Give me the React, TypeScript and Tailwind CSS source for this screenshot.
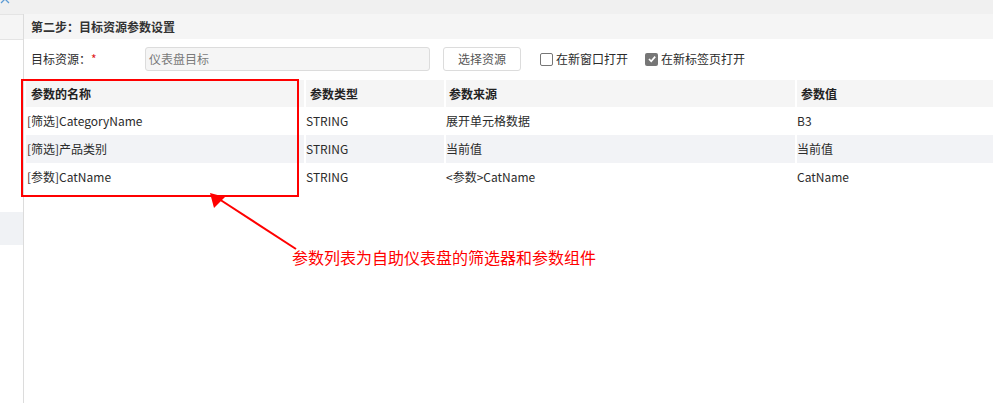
import React from "react";

const rows = [
  { name: "[筛选]CategoryName", type: "STRING", src: "展开单元格数据", val: "B3" },
  { name: "[筛选]产品类别", type: "STRING", src: "当前值", val: "当前值" },
  { name: "[参数]CatName", type: "STRING", src: "<参数>CatName", val: "CatName" },
];

export default function App() {
  return (
    <div className="relative w-[993px] h-[403px] overflow-hidden bg-white font-['Noto_Sans_CJK_SC','Noto_Sans',sans-serif] text-[12px] text-[#2b2b2b]">
      <div className="relative h-[14px] bg-[#f0f0f0]">
        <svg className="absolute left-0 top-[-5px]" width="12" height="10" viewBox="0 0 12 10">
          <polyline points="1,8 5,4 9,8" fill="none" stroke="#5b9bd5" strokeWidth="1.3" />
        </svg>
      </div>
      <div className="flex h-[389px]">
        <div className="flex w-[24px] flex-col border-r border-[#dcdcdc]">
          <div className="h-[26px] border-y border-[#e4e4e4] bg-[#f5f5f5]" />
          <div className="h-[172px]" />
          <div className="h-[33px] bg-[#f0f2f5]" />
        </div>
        <div className="flex flex-1 flex-col">
          <div className="flex h-[25px] items-center bg-[#f5f5f5] pl-[7px] font-bold text-[#333]">
            第二步：目标资源参数设置
          </div>
          <div className="mt-[8px] flex h-[24px] items-center">
            <div className="w-[121px] pl-[7px]">
              目标资源：<span className="text-[#e02020]">*</span>
            </div>
            <div className="flex h-[24px] w-[285px] items-center rounded-[3px] border border-[#dcdcdc] bg-[#f5f5f5] pl-[3px] text-[#7a7a7a]">
              仪表盘目标
            </div>
            <div className="ml-[13px] flex h-[24px] w-[78px] items-center justify-center rounded-[3px] border border-[#dcdcdc] bg-white text-[#555]">
              选择资源
            </div>
            <div className="ml-[19px] flex items-center">
              <div className="h-[13px] w-[13px] rounded-[2px] border border-[#767676] bg-white" />
              <span className="ml-[3px]">在新窗口打开</span>
            </div>
            <div className="ml-[17px] flex items-center">
              <div className="flex h-[13px] w-[13px] items-center justify-center rounded-[2px] bg-[#767676]">
                <svg width="10" height="10" viewBox="0 0 10 10">
                  <polyline points="2,5 4.2,7.3 8.2,2.6" fill="none" stroke="#fff" strokeWidth="1.7" />
                </svg>
              </div>
              <span className="ml-[3px]">在新标签页打开</span>
            </div>
          </div>
          <div className="ml-[2px] mt-[9px] grid grid-cols-[278px_140px_351px_1fr]">
            <div className="flex h-[27px] items-center bg-[#f5f5f5] pl-[5px] font-bold text-[#222]">参数的名称</div>
            <div className="flex h-[27px] items-center border-l-2 border-white bg-[#f5f5f5] pl-[4px] font-bold text-[#222]">参数类型</div>
            <div className="flex h-[27px] items-center border-l-2 border-white bg-[#f5f5f5] pl-[3px] font-bold text-[#222]">参数来源</div>
            <div className="flex h-[27px] items-center border-l-2 border-white bg-[#f5f5f5] pl-[4px] font-bold text-[#222]">参数值</div>
            {rows.map((r, i) => {
              const bg = i === 1 ? "bg-[#f2f3f6]" : "bg-white";
              return (
                <React.Fragment key={i}>
                  <div className={`flex h-[28px] items-center pl-[1px] ${bg}`}>{r.name}</div>
                  <div className={`flex h-[28px] items-center border-l-2 border-white ${bg}`}>{r.type}</div>
                  <div className={`flex h-[28px] items-center border-l-2 border-white ${bg}`}>{r.src}</div>
                  <div className={`flex h-[28px] items-center border-l-2 border-white ${bg}`}>{r.val}</div>
                </React.Fragment>
              );
            })}
          </div>
        </div>
      </div>

      <div className="pointer-events-none absolute left-[21px] top-[79px] h-[118px] w-[278px] border-2 border-[#ff0000]" />
      <svg className="pointer-events-none absolute left-0 top-0" width="993" height="403" viewBox="0 0 993 403">
        <line x1="296" y1="249" x2="219" y2="199" stroke="#ff0000" strokeWidth="2" />
        <polygon points="210,193 225,197 214,208" fill="#ff0000" />
      </svg>
      <div className="absolute left-[292px] top-[247px] text-[16px] leading-[20px] text-[#ff0000]">
        参数列表为自助仪表盘的筛选器和参数组件
      </div>
    </div>
  );
}
